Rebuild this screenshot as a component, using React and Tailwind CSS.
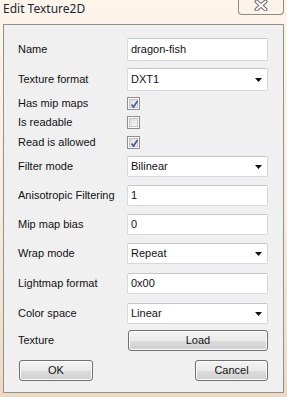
import React from "react";

function Arrow() {
  return (
    <svg width="7" height="4" viewBox="0 0 7 4" className="absolute right-[5px] top-1/2 -translate-y-1/2">
      <path d="M0 0 H7 L3.5 4 Z" fill="#111" />
    </svg>
  );
}

function Field({ value, select, h }) {
  return (
    <div
      className={`relative w-[141px] ${h} bg-white border border-[#d5d9de] border-t-[#c2c6cc] rounded-[2px] flex items-center pl-[3px] text-[#111]`}
    >
      {value}
      {select && <Arrow />}
    </div>
  );
}

function Check({ checked }) {
  return (
    <div className="w-[13px] h-[13px] border border-[#8f8f8f] bg-white p-[1px]">
      <div className="w-full h-full bg-gradient-to-br from-[#dcdcdc] to-[#f8f8f8] border border-[#c4c4c4] relative">
        {checked && (
          <svg width="11" height="11" viewBox="0 0 11 11" className="absolute -left-[1px] -top-[1px]">
            <path d="M2.5 5.5 L4.5 8 L8.5 2" fill="none" stroke="#4a5fa0" strokeWidth="1.8" />
          </svg>
        )}
      </div>
    </div>
  );
}

function Row({ label, children, className }) {
  return (
    <div className={`flex items-center ${className}`}>
      <div className="w-[109px] pl-[14px] box-content shrink-0">{label}</div>
      {children}
    </div>
  );
}

function Btn({ children, w }) {
  return (
    <div
      className={`${w} h-[21px] border border-[#707070] rounded-[3px] flex items-center justify-center text-[#111] bg-[linear-gradient(to_bottom,#f2f2f2_0%,#ebebeb_50%,#dddddd_51%,#cfcfcf_100%)] shadow-[inset_0_0_0_1px_#fcfcfc]`}
    >
      {children}
    </div>
  );
}

export default function App() {
  return (
    <div className="w-[287px] h-[397px] overflow-hidden bg-gradient-to-b from-[#fdf5ea] via-[#faeedd] to-[#efd9c0] font-['Liberation_Sans',Arial,sans-serif] text-[11px] text-[#111] leading-none">
      <div className="h-[24px] flex items-start justify-between">
        <div className="pl-[3px] pt-[1px] font-['Noto_Sans',sans-serif] text-[12px] leading-[16px] text-[#1a2535]">
          Edit Texture2D
        </div>
        <div className="mr-[3px] w-[46px] h-[15px] border border-t-0 border-[#8d8a86] rounded-b-[4px] bg-[#fbf3ea]/70 flex items-start justify-center">
          <svg width="16" height="11" viewBox="0 0 16 11">
            <path d="M3.5 1.5 L12.5 9.5 M12.5 1.5 L3.5 9.5" stroke="#6a6a6a" strokeWidth="4" strokeLinecap="round" />
            <path d="M3.5 1.5 L12.5 9.5 M12.5 1.5 L3.5 9.5" stroke="#ffffff" strokeWidth="2" strokeLinecap="round" />
          </svg>
        </div>
      </div>
      <div className="ml-[3px] w-[281px] h-[369px] border border-[#8e9092] bg-[#f0f0f0] flex flex-col">
        <Row label="Name" className="mt-[13px]">
          <Field value="dragon-fish" h="h-[23px]" />
        </Row>
        <Row label="Texture format" className="mt-[7px]">
          <Field value="DXT1" select h="h-[23px]" />
        </Row>
        <Row label="Has mip maps" className="mt-[6px] h-[13px]">
          <Check checked />
        </Row>
        <Row label="Is readable" className="mt-[6px] h-[13px]">
          <Check />
        </Row>
        <Row label="Read is allowed" className="mt-[7px] h-[13px]">
          <Check checked />
        </Row>
        <Row label="Filter mode" className="mt-[7px]">
          <Field value="Bilinear" select h="h-[21px]" />
        </Row>
        <Row label="Anisotropic Filtering" className="mt-[8px]">
          <Field value="1" h="h-[21px]" />
        </Row>
        <Row label="Mip map bias" className="mt-[8px]">
          <Field value="0" h="h-[21px]" />
        </Row>
        <Row label="Wrap mode" className="mt-[8px]">
          <Field value="Repeat" select h="h-[21px]" />
        </Row>
        <Row label="Lightmap format" className="mt-[9px]">
          <Field value="0x00" h="h-[21px]" />
        </Row>
        <Row label="Color space" className="mt-[9px]">
          <Field value="Linear" select h="h-[21px]" />
        </Row>
        <Row label="Texture" className="mt-[6px]">
          <div className="ml-[1px]">
            <Btn w="w-[140px]">Load</Btn>
          </div>
        </Row>
        <div className="mt-[9px] flex justify-between pl-[15px] pr-[15px]">
          <Btn w="w-[74px]">OK</Btn>
          <Btn w="w-[73px]">Cancel</Btn>
        </div>
      </div>
    </div>
  );
}
